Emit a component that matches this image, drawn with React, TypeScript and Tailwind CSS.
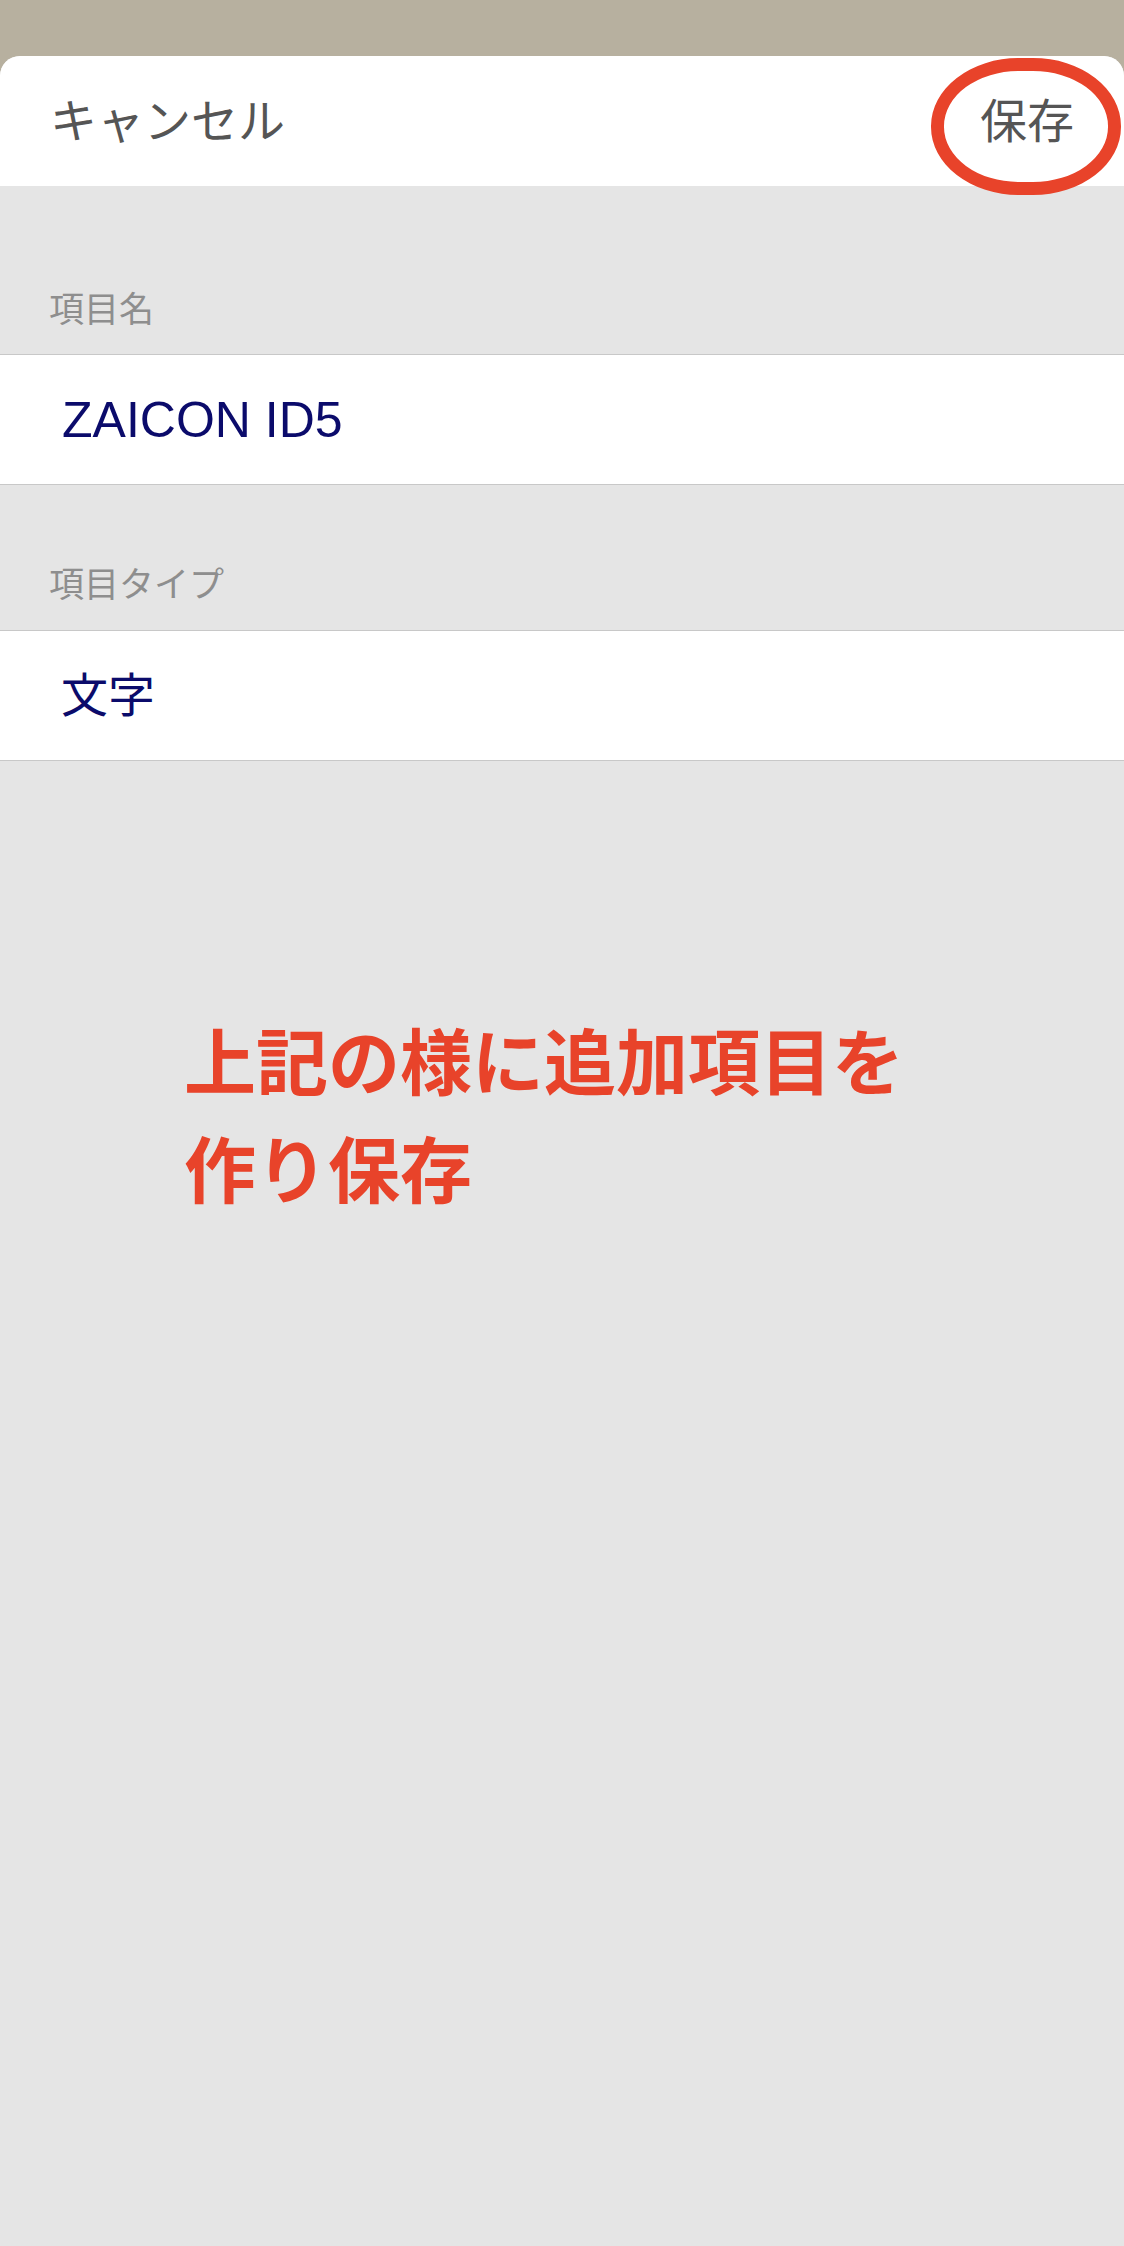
export default function App() {
  const font = { fontFamily: '"Liberation Sans", "Noto Sans CJK JP", sans-serif' }
  return (
    <div className="w-[1124px] min-h-[2246px] bg-[#b7b09f]" style={font}>
      <div className="h-[56px]" />
      <div className="bg-[#e5e5e5] rounded-t-[20px] overflow-hidden min-h-[2190px]">
        {/* header */}
        <div className="relative h-[130px] bg-white flex items-center justify-between pl-[50px] pr-[50px]">
          <span className="text-[47px] leading-none text-[#555555]">キャンセル</span>
          <span className="text-[47px] leading-none text-[#555555]">保存</span>
          {/* annotation ring */}
          <div className="absolute left-[931px] top-[2px] w-[190px] h-[137px] rounded-[88px/68px] border-[13px] border-[#e8432a]" />
        </div>

        <div className="h-[168px] flex items-end pb-[27px] pl-[49px]">
          <span className="text-[35px] leading-none text-[#8e8e8e]">項目名</span>
        </div>
        <div className="h-[131px] bg-white border-y border-[#c8c8c8] flex items-center pl-[62px]">
          <span className="text-[50px] leading-none text-[#0b0b6b]">ZAICON ID5</span>
        </div>

        <div className="h-[145px] flex items-end pb-[28px] pl-[49px]">
          <span className="text-[35px] leading-none text-[#8e8e8e]">項目タイプ</span>
        </div>
        <div className="h-[131px] bg-white border-y border-[#c8c8c8] flex items-center pl-[61px]">
          <span className="text-[47px] leading-none text-[#0b0b6b]">文字</span>
        </div>

        {/* red note */}
        <div className="pt-[249px] pl-[184px] text-[72px] leading-[108px] font-bold text-[#e8432a]">
          <div>上記の様に追加項目を</div>
          <div>作り保存</div>
        </div>
      </div>
    </div>
  )
}
